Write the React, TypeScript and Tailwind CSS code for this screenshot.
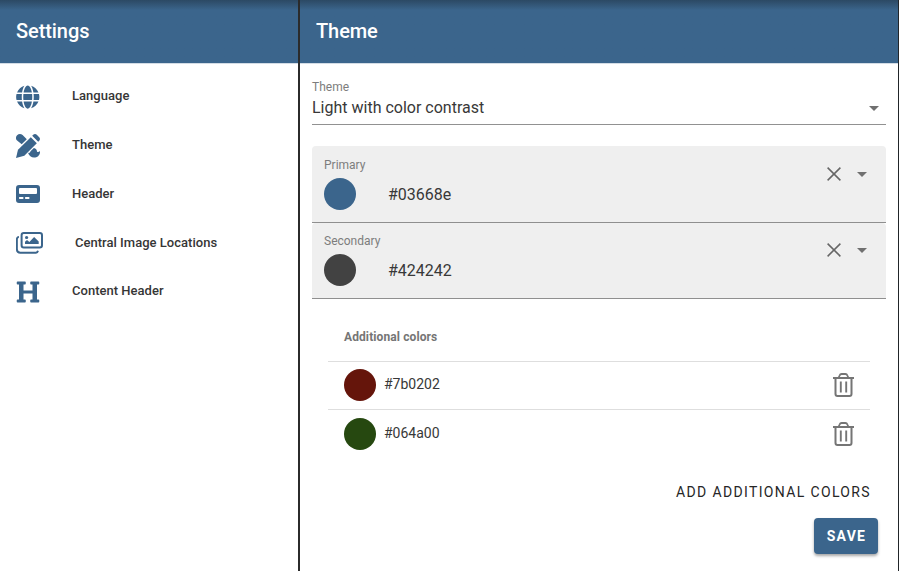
import type { ReactNode } from "react";
import { FaGlobe, FaHeading } from "react-icons/fa";

function DesignIcon() {
  return (
    <svg className="shrink-0" width="24" height="24" viewBox="0 0 24 24" fill="#3b658c">
      <path d="M1.1 1.3C2.6-.3 5-.3 6.6 1.1l4.2 4.1-5.1 5.1L1.1 6.6C-.4 5.1-.4 2.9 1.1 1.3z" />
      <path d="M14.8 3.2l6 6L8.3 21.8 0 24l2-8.2z" />
      <path d="M16.2 1.8l1-1c1-1 2.6-1 3.6 0l2.4 2.4c1 1 1 2.6 0 3.6l-1 1z" />
      <path d="M12 18.8c1.4.4 2.2-.3 2.5-1.5l3.4-3.4c1.9.3 3.1 1.9 3.1 3.5.4 1 2 .7 3-.4.3 3.700-2.300 6.600-6 6.600-2.700 0-5-1.700-6-4.800z" />
    </svg>
  );
}

function HeaderIcon() {
  return (
    <svg className="-mt-[2px] shrink-0" width="24" height="18" viewBox="0 0 24 18">
      <path
        fill="#3b658c"
        fillRule="evenodd"
        d="M3 0h18a3 3 0 013 3v12a3 3 0 01-3 3H3a3 3 0 01-3-3V3a3 3 0 013-3zm1 3a1 1 0 00-1 1v4a1 1 0 001 1h16a1 1 0 001-1V4a1 1 0 00-1-1zM3.7 12a.7.7 0 00-.7.7v.6a.7.7 0 00.7.7h3.1a.7.7 0 00.7-.7v-.6a.7.7 0 00-.7-.7zm6 0a.7.7 0 00-.7.7v.6a.7.7 0 00.7.7h3.1a.7.7 0 00.7-.7v-.6a.7.7 0 00-.7-.7z"
      />
    </svg>
  );
}

function ImagesIcon() {
  return (
    <svg className="-mt-[2px] shrink-0" width="27" height="22" viewBox="0 0 27 22" fill="none" stroke="#3b658c">
      <rect x="5.6" y="1" width="20.4" height="14.4" rx="2.2" strokeWidth="2" />
      <path d="M2.9 5c-1.2 0-2 .8-2 2v10.3c0 2 1.5 3.4 3.4 3.4H20c1 0 1.7-.6 2-1.900" strokeWidth="1.9" />
      <circle cx="10.6" cy="5.5" r="1.6" fill="#3b658c" stroke="none" />
      <path d="M9 12V9.8l2-1.900 2.400 2 4.700-4.800 4.600 4.300V12z" fill="#3b658c" stroke="none" />
    </svg>
  );
}

function Caret() {
  return (
    <svg width="10" height="5" viewBox="0 0 10 5" fill="#707070">
      <path d="M0 0h10L5 5z" />
    </svg>
  );
}

function CloseIcon() {
  return (
    <svg width="14" height="14" viewBox="0 0 14 14" stroke="#666" strokeWidth="1.5">
      <path d="M.6.6l12.8 12.8M13.4.6L.6 13.4" />
    </svg>
  );
}

function TrashIcon() {
  return (
    <svg width="21" height="24" viewBox="0 0 21 24" fill="none" stroke="#757575">
      <path d="M0 5h21" strokeWidth="2" />
      <path d="M5.5 5l1.1-2.5Q7.2 1 8.6 1h3.8q1.4 0 2 1.5L15.5 5" strokeWidth="1.8" />
      <path d="M2.5 5v16q0 2 2 2h12q2 0 2-2V5" strokeWidth="2" />
      <path d="M7.8 8.5v11M13.2 8.5v11" strokeWidth="1.9" />
    </svg>
  );
}

function NavItem({ icon, label, indent = "pl-[72px]", height = "h-[49px]" }: { icon: ReactNode; label: string; indent?: string; height?: string }) {
  return (
    <li className={`grid items-center ${height}`}>
      <span className="col-start-1 row-start-1 flex items-center pl-4 pt-[2px]">{icon}</span>
      <span className={`col-start-1 row-start-1 text-[13px] leading-5 font-medium tracking-[0.02px] text-[#363636] ${indent}`}>{label}</span>
    </li>
  );
}

function TitleBar({ title }: { title: string }) {
  return (
    <header className="h-16 border-b border-[#d3dce5] bg-[#3b658c] bg-linear-to-b from-[#2c4964] via-[#3b658c] via-[16%] to-[#3b658c] px-4 pt-[17px] text-xl font-medium text-white">
      <h1 className="leading-7 tracking-[-0.08px]">{title}</h1>
    </header>
  );
}

function ColorField({ label, value, swatch, padding, actionsPadding }: { label: string; value: string; swatch: string; padding: string; actionsPadding: string }) {
  return (
    <div className="flex h-full items-start justify-between rounded-t border-b border-[#8f8f8f] bg-[#efefef] pr-[19px] pl-3">
      <div className={padding}>
        <div className="text-xs leading-4 text-[#7d7d7d]">{label}</div>
        <div className="mt-[5px] flex items-center gap-8">
          <span className={`size-8 rounded-full ${swatch}`} />
          <span className="pt-[2px] text-base font-normal tracking-[-0.03px] text-[#383838]">{value}</span>
        </div>
      </div>
      <div className={`flex items-center gap-4 ${actionsPadding}`}>
        <CloseIcon />
        <Caret />
      </div>
    </div>
  );
}

function ColorRow({ value, swatch, height }: { value: string; swatch: string; height: string }) {
  return (
    <li className={`flex items-center justify-between border-t border-[#dedede] pr-4 pl-4 ${height}`}>
      <div className="flex items-center gap-2">
        <span className={`size-8 rounded-full ${swatch}`} />
        <span className="pb-[2px] text-sm text-[#383838]">{value}</span>
      </div>
      <TrashIcon />
    </li>
  );
}

export default function App() {
  return (
    <div className="flex h-[571px] w-[899px] overflow-hidden border-r border-[#212529] bg-white font-[Roboto,sans-serif]">
      <aside className="w-[300px] shrink-0 border-r-2 border-[#2b2b2b]">
        <TitleBar title="Settings" />
        <ul className="pt-[7px]">
          <NavItem icon={<FaGlobe className="mr-px h-6 w-[23.5px] shrink-0 text-[#3b658c]" />} label="Language" />
          <NavItem icon={<DesignIcon />} label="Theme" />
          <NavItem icon={<HeaderIcon />} label="Header" />
          <NavItem icon={<ImagesIcon />} label="Central Image Locations" indent="pl-[75px]" />
          <NavItem icon={<FaHeading className="size-6 shrink-0 text-[#3b658c]" />} label="Content Header" height="h-[48px]" />
        </ul>
      </aside>
      <main className="min-w-0 flex-1">
        <TitleBar title="Theme" />
        <div className="px-3">
          <div className="flex h-[61px] items-start justify-between border-b border-[#919191] pt-[14px] pr-[7px]">
            <div>
              <div className="text-xs leading-[18px] text-[#7d7d7d]">Theme</div>
              <div className="text-base leading-6 text-[#383838]">Light with color contrast</div>
            </div>
            <span className="mt-[28px] block leading-none"><Caret /></span>
          </div>
          <div className="mt-[21px] h-[77px]">
            <ColorField label="Primary" value="#03668e" swatch="bg-[#3b658c]" padding="pt-[11px]" actionsPadding="pt-[21px]" />
          </div>
          <div className="h-[76px]">
            <ColorField label="Secondary" value="#424242" swatch="bg-[#424242]" padding="pt-[10px]" actionsPadding="pt-[20px]" />
          </div>
          <section className="mt-[14px] px-4">
            <h2 className="h-[48px] px-4 text-xs leading-[48px] font-bold tracking-[0.1px] text-[#757575]">Additional colors</h2>
            <ul>
              <ColorRow value="#7b0202" swatch="bg-[#65150b]" height="h-[48px] pb-[2px]" />
              <ColorRow value="#064a00" swatch="bg-[#264810]" height="h-[49px]" />
            </ul>
          </section>
          <div className="mt-[16px] flex h-9 items-center justify-end pr-[15px]">
            <button className="text-sm font-normal tracking-[1.35px] text-[#262626]">ADD ADDITIONAL COLORS</button>
          </div>
          <div className="mt-[8px] flex justify-end pr-2">
            <button className="h-9 w-16 rounded bg-[#3b658c] pl-px text-sm font-bold tracking-[1.25px] text-white shadow-[0_2px_3px_rgba(0,0,0,0.35)]">SAVE</button>
          </div>
        </div>
      </main>
    </div>
  );
}
